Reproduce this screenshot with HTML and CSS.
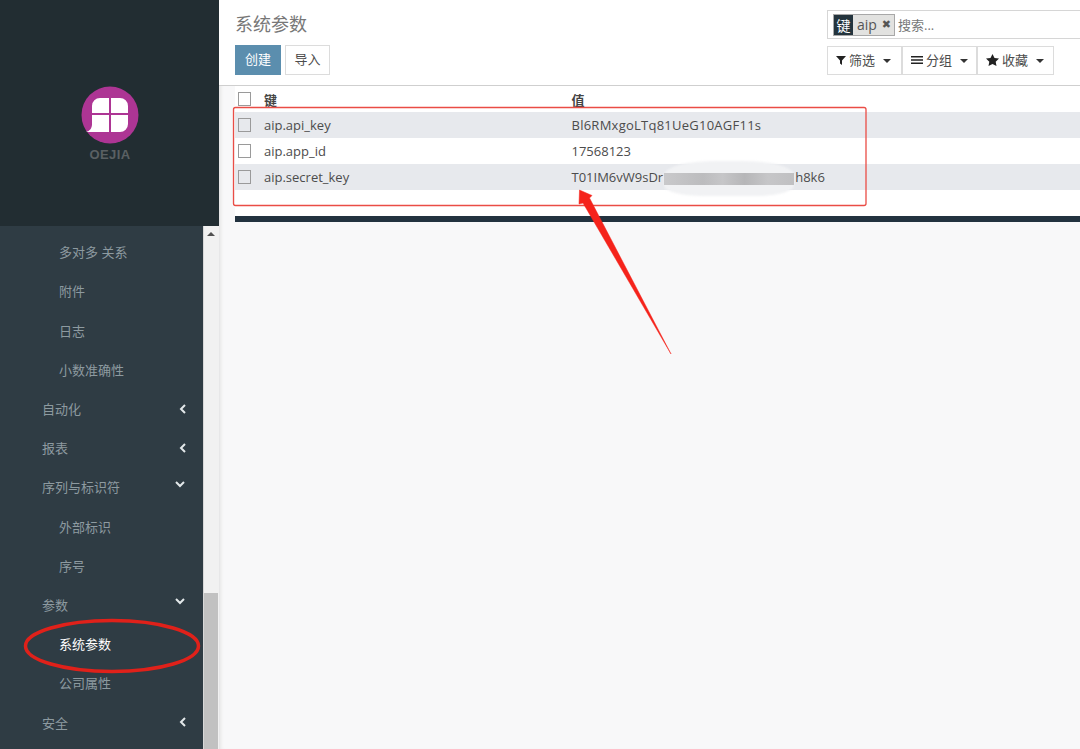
FILE: index.html
```html
<!DOCTYPE html>
<html lang="zh">
<head>
<meta charset="utf-8">
<title>系统参数</title>
<link rel="stylesheet" href="styles.css">
</head>
<body>
<div class="app">
  <aside class="sidebar">
    <div class="brand">
      <svg class="logo" width="60" height="80" viewBox="0 0 60 80">
        <circle cx="30" cy="29" r="28.500" fill="#ad3594"/>
        <path d="M12 20a8 8 0 0 1 8-8h9v15H12zM31 12h9a8 8 0 0 1 8 8v7H31zM31 29h17v9a8 8 0 0 1-8 8h-9zM29 29v17H6c4-1 6-4 6-8v-9z" fill="#fff"/>
        <text x="30" y="73" class="logo-text" text-anchor="middle">OEJIA</text>
      </svg>
    </div>
    <div class="menu-wrap">
      <nav class="menu">
        <a class="item sub">多对多 关系</a>
        <a class="item sub">附件</a>
        <a class="item sub">日志</a>
        <a class="item sub">小数准确性</a>
        <a class="item">自动化<svg class="chev" width="8" height="10" viewBox="0 0 8 10"><path d="M6 1 2 5l4 4" /></svg></a>
        <a class="item">报表<svg class="chev" width="8" height="10" viewBox="0 0 8 10"><path d="M6 1 2 5l4 4" /></svg></a>
        <a class="item">序列与标识符<svg class="chev down" width="10" height="8" viewBox="0 0 10 8"><path d="m1 2 4 4 4-4" /></svg></a>
        <a class="item sub">外部标识</a>
        <a class="item sub">序号</a>
        <a class="item">参数<svg class="chev down" width="10" height="8" viewBox="0 0 10 8"><path d="m1 2 4 4 4-4" /></svg></a>
        <a class="item sub active">系统参数</a>
        <a class="item sub">公司属性</a>
        <a class="item">安全<svg class="chev" width="8" height="10" viewBox="0 0 8 10"><path d="M6 1 2 5l4 4" /></svg></a>
      </nav>
      <div class="scrollbar">
        <div class="scroll-up"></div>
        <div class="scroll-thumb"></div>
      </div>
    </div>
  </aside>
  <main class="main">
    <header class="panel">
      <div class="panel-left">
        <h1 class="title">系统参数</h1>
        <div class="actions">
          <button class="btn primary">创建</button>
          <button class="btn import">导入</button>
        </div>
      </div>
      <div class="panel-right">
        <div class="search">
          <span class="facet"><span class="facet-key">键</span><span class="facet-val">aip<b class="facet-x">✖</b></span></span>
          <span class="search-hint">搜索...</span>
        </div>
        <div class="filters">
          <button class="btn filter"><svg width="10" height="10" viewBox="0 0 10 10"><path d="M0 1h10L6 5.500V10L4 8.500V5.500z" fill="#222"/></svg>筛选<i class="caret"></i></button>
          <button class="btn filter"><svg width="12" height="10" viewBox="0 0 12 10"><path d="M0 1h12v1.600H0zM0 4.200h12v1.600H0zM0 7.400h12V9H0z" fill="#222"/></svg>分组<i class="caret"></i></button>
          <button class="btn filter"><svg width="13" height="12" viewBox="0 0 13 12"><path d="m6.500 0 2 4 4.500.6-3.300 3.100.8 4.300-4-2.100-4 2.100.8-4.300L0 4.600 4.500 4z" fill="#222"/></svg>收藏<i class="caret"></i></button>
        </div>
      </div>
    </header>
    <section class="content">
      <div class="table">
        <div class="row head"><span class="check"></span><span class="cell key">键</span><span class="cell">值</span></div>
        <div class="row odd"><span class="check"></span><span class="cell key">aip.api_key</span><span class="cell wide">Bl6RMxgoLTq81UeG10AGF11s</span></div>
        <div class="row"><span class="check"></span><span class="cell key">aip.app_id</span><span class="cell">17568123</span></div>
        <div class="row odd"><span class="check"></span><span class="cell key">aip.secret_key</span><span class="cell">T01IM6vW9sDr<span class="masked"></span>h8k6</span></div>
        <div class="table-foot"></div>
      </div>
    </section>
  </main>
</div>
<svg class="marks" width="1080" height="749" viewBox="0 0 1080 749">
  <rect x="233.500" y="107.500" width="632.500" height="98" rx="2" class="mark-box"/>
  <ellipse cx="112" cy="646" rx="86.500" ry="25.500" class="mark-ring"/>
  <path d="M579.500 190 592 195.500 589.500 198 671 354 583 203 579 204z" class="mark-arrow"/>
</svg>
</body>
</html>
```
FILE: styles.css
```css
* { box-sizing: border-box; }
html, body { margin: 0; height: 100%; overflow: hidden; }
body {
  font-family: "Open Sans", "Noto Sans CJK SC", sans-serif;
  font-size: 13px;
  color: #4c4c4c;
  background: #f8f8f9;
}
.app { display: flex; height: 749px; }

.sidebar { width: 219px; flex: none; display: flex; flex-direction: column; background: #2f3c44; }
.brand { height: 226px; background: #222d32; display: flex; justify-content: center; padding-top: 86px; flex: none; }
.logo { margin-left: 1px; }
.logo-text { font-family: "Liberation Sans", sans-serif; font-size: 13px; font-weight: 700; letter-spacing: .4px; fill: #5a6063; }
.menu-wrap { flex: 1; display: flex; min-height: 0; }
.menu { flex: 1; padding-top: 6.200px; overflow: hidden; }
.item { height: 39.200px; display: flex; align-items: center; justify-content: space-between; padding: 0 16px 0 42px; color: #8d9aa0; white-space: nowrap; }
.item.sub { padding-left: 59px; }
.item.active { color: #fff; }
.chev { fill: none; stroke: #e3e8ea; stroke-width: 2; }
.chev.down { margin-right: 2px; margin-top: -6px; }
.scrollbar { width: 16px; background: #f1f1f1; flex: none; display: flex; flex-direction: column; border-left: 1px solid #d8d8d8; }
.scroll-up { height: 367px; position: relative; }
.scroll-up::before { content: ""; position: absolute; left: 3px; top: 6px; border: 4px solid transparent; border-top: 0; border-bottom: 4px solid #505050; }
.scroll-thumb { flex: 1; background: #c1c1c1; margin: 0 1px 0 0; }

.main { flex: 1; min-width: 0; display: flex; flex-direction: column; box-shadow: inset 4px 0 4px -3px #dcdcdc; }
.panel { height: 86px; flex: none; background: #fff; border-bottom: 1px solid #cfcfcf; display: flex; justify-content: space-between; padding-left: 16px; }
.title { margin: 12px 0 9px; font-size: 18px; line-height: 24px; font-weight: 400; color: #777; }
.actions { display: flex; gap: 4px; }
.btn { height: 30px; padding: 0 0 3px; border: 1px solid #dcdcdc; background: #fff; color: #4c4c4c; font: inherit; display: inline-flex; align-items: center; justify-content: center; border-radius: 0; white-space: nowrap; }
.btn.primary { width: 46px; background: #5b8eae; border-color: #5b8eae; color: #fff; }
.btn.import { width: 45px; }
.panel-right { width: 253px; padding-top: 10px; }
.search { height: 29px; border: 1px solid #d6d6d6; border-right: 0; display: flex; align-items: center; padding-left: 5px; gap: 3px; }
.facet { display: flex; width: 62px; height: 22px; border: 1px solid #a8a8a8; background: #e2e2e0; }
.facet-key { width: 19px; flex: none; background: #24343d; color: #fff; display: flex; align-items: center; justify-content: center; font-size: 14px; }
.facet-val { flex: 1; display: flex; justify-content: space-between; align-items: center; padding: 0 3px 1px 4px; font-size: 14px; font-family: "Open Sans", sans-serif; color: #555; white-space: nowrap; }
.facet-x { font-size: 11px; color: #555; font-family: "DejaVu Sans", sans-serif; }
.search-hint { color: #777; }
.filters { display: flex; margin-top: 7px; }
.btn.filter { width: 75px; height: 29px; padding: 0 0 2px 8px; gap: 3px; justify-content: flex-start; }
.btn.filter:last-child { width: 77px; }
.caret { margin-left: 5px; margin-top: 2px; border: 4px solid transparent; border-top: 4px solid #333; border-bottom: 0; }

.content { flex: 1; padding-left: 16px; }
.table { background: #fff; }
.row { height: 26px; display: flex; align-items: center; padding-left: 3px; }
.row.odd { background: #e7e9ed; }
.row.head { font-weight: 700; color: #444; }
.check { width: 13px; height: 14px; flex: none; border: 1px solid #9a9a9a; background: transparent; margin-right: 13px; }
.cell { display: block; white-space: nowrap; }
.wide { letter-spacing: .25px; }
.key { width: 307.500px; }
.masked { display: inline-block; position: relative; vertical-align: middle; width: 130px; height: 12px; margin: 0 1px; }
.masked::before { content: ""; position: absolute; left: 0; right: 0; top: -12px; bottom: -11px; background: #f1f2f4; border-radius: 40% 40% 30% 30%; filter: blur(1px); }
.masked::after { content: ""; position: absolute; inset: 0; background: linear-gradient(90deg, #c9c9cb, #bcbcbe 30%, #c6c6c8 45%, #b6b6b8 62%, #c6c6c8 80%, #c0c0c2); }
.table-foot { height: 32px; border-bottom: 6px solid #22323f; }

.marks { position: absolute; left: 0; top: 0; pointer-events: none; }
.mark-box { fill: none; stroke: #ea4d46; stroke-width: 1.300; }
.mark-ring { fill: none; stroke: #e0211a; stroke-width: 3.500; }
.mark-arrow { fill: #f5231b; stroke: #f5231b; stroke-width: .5; }
```
